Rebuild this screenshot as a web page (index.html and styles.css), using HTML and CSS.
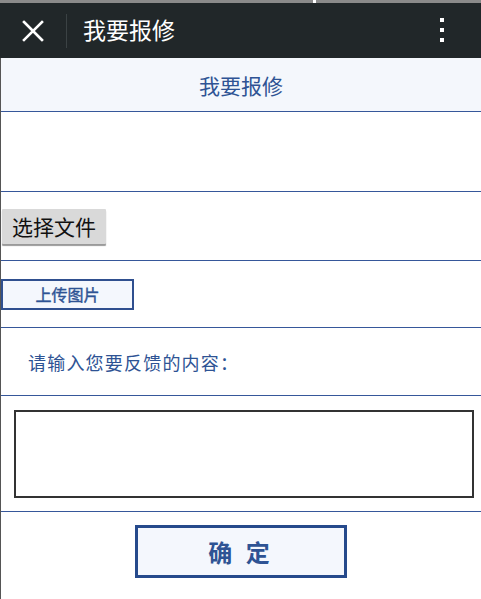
FILE: index.html
```html
<!DOCTYPE html>
<html lang="zh-CN">
<head>
<meta charset="utf-8">
<title>我要报修</title>
<link rel="stylesheet" href="styles.css">
</head>
<body>
<div class="strip"><span class="strip-dot"></span></div>
<header class="appbar">
  <svg class="close" width="22" height="22" viewBox="0 0 22 22"><path d="M2 2L20 20M20 2L2 20" stroke="#fff" stroke-width="2.6" stroke-linecap="square"/></svg>
  <span class="divider"></span>
  <span class="appbar-title">我要报修</span>
  <span class="more"><i></i><i></i><i></i></span>
</header>
<main class="page">
  <div class="row row-title">我要报修</div>
  <div class="row row-blank"></div>
  <div class="row row-file"><button class="file-btn">选择文件</button></div>
  <div class="row row-upload"><button class="upload-btn">上传图片</button></div>
  <div class="row row-label">请输入您要反馈的内容：</div>
  <div class="row row-text"><textarea class="feedback"></textarea></div>
  <div class="row row-submit"><button class="submit-btn">确 定</button></div>
</main>
</body>
</html>
```
FILE: styles.css
```css
* { box-sizing: border-box; }
html, body { margin: 0; padding: 0; background: #fff; }
body {
  width: 481px;
  height: 599px;
  overflow: hidden;
  font-family: "Noto Sans CJK SC", "Noto Sans", sans-serif;
}
.strip {
  height: 3px;
  background: #8a8a8a;
  position: relative;
}
.strip-dot {
  position: absolute;
  left: 313px;
  top: 0;
  width: 3px;
  height: 3px;
  background: #fff;
}
.appbar {
  height: 55px;
  background: #212729;
  display: flex;
  align-items: center;
  padding-left: 22px;
}
.close { flex: none; display: block; }
.divider {
  width: 1px;
  height: 34px;
  background: #3b4244;
  margin-left: 22px;
  margin-right: 16px;
}
.appbar-title {
  color: #fff;
  font-size: 23px;
  line-height: 1;
  flex: 1;
  margin-top: -2px;
}
.more {
  display: flex;
  flex-direction: column;
  gap: 6px;
  margin-right: 37px;
  margin-top: -2px;
}
.more i {
  display: block;
  width: 4px;
  height: 4px;
  background: #fff;
}
.page {
  border-left: 1px solid #555;
  height: 541px;
}
.row {
  border-bottom: 1px solid #36579a;
  display: flex;
  align-items: center;
}
.row-title {
  height: 54px;
  background: #f4f7fc;
  justify-content: center;
  color: #2e5394;
  font-size: 21px;
}
.row-blank { height: 80px; }
.row-file { height: 69px; }
.row-upload { height: 67px; }
.row-label {
  height: 68px;
  padding-left: 27px;
  color: #2e5394;
  font-size: 18px;
  letter-spacing: 1.2px;
}
.row-text {
  height: 116px;
  padding: 0 7px 0 13px;
}
.row-submit {
  border-bottom: none;
  align-items: flex-start;
  justify-content: center;
  padding-top: 13px;
  height: 87px;
}
.file-btn {
  font-family: "Noto Sans CJK SC", sans-serif;
  font-size: 21px;
  line-height: 1;
  height: 35px;
  width: 104px;
  margin-left: 1px;
  padding: 0;
  border: none;
  background: #d9d9d9;
  color: #111;
  box-shadow: 0 2px 1px #9a9a9a;
  border-radius: 1px;
}
.upload-btn {
  font-family: "Noto Sans CJK SC", sans-serif;
  font-size: 16px;
  line-height: 1;
  height: 31px;
  width: 133px;
  padding: 0;
  border: 2px solid #2f4f8f;
  background: #f4f7fd;
  color: #2e5394;
  -webkit-text-stroke: 0.4px #2e5394;
}
.feedback {
  display: block;
  width: 460px;
  height: 88px;
  border: 2px solid #333;
  resize: none;
  margin: 0;
  padding: 0;
  background: #fff;
}
.submit-btn {
  font-family: "Noto Sans CJK SC", sans-serif;
  font-size: 24px;
  font-weight: bold;
  line-height: 1;
  width: 212px;
  height: 53px;
  padding: 0;
  border: 3px solid #264a8c;
  background: #f4f7fd;
  color: #2e5394;
  letter-spacing: 4px;
}
```
